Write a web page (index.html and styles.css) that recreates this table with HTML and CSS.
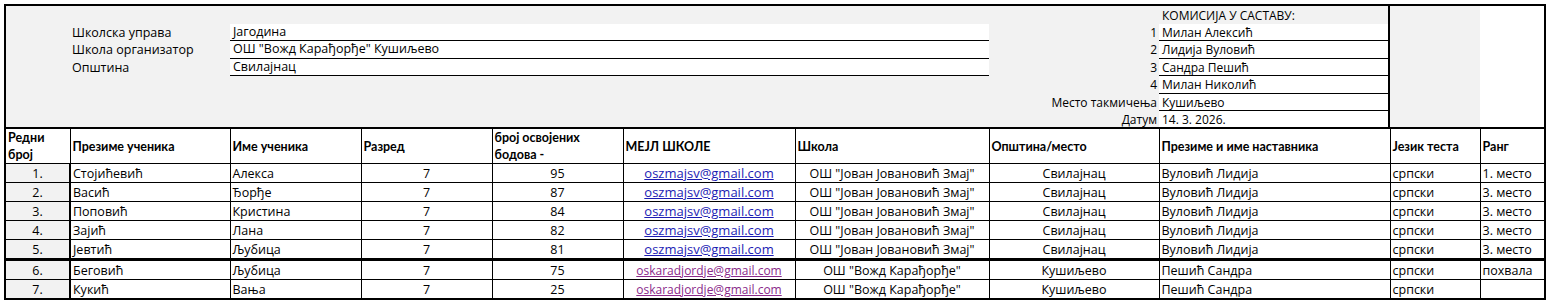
FILE: index.html
```html
<!DOCTYPE html>
<html lang="sr">
<head>
<meta charset="utf-8">
<title>Резултати такмичења</title>
<link rel="stylesheet" href="styles.css">
</head>
<body>
<div class="sheet">
  <div class="head">
    <div class="info">
      <div class="info-row"><div class="lbl">Школска управа</div><div class="val">Јагодина</div></div>
      <div class="info-row"><div class="lbl">Школа организатор</div><div class="val">ОШ "Вожд Карађорђе" Кушиљево</div></div>
      <div class="info-row"><div class="lbl">Општина</div><div class="val">Свилајнац</div></div>
    </div>
    <div class="comm">
      <div class="comm-row title"><div class="clbl"></div><div class="cval">КОМИСИЈА У САСТАВУ:</div></div>
      <div class="comm-row"><div class="clbl">1</div><div class="cval w">Милан Алексић</div></div>
      <div class="comm-row"><div class="clbl">2</div><div class="cval w">Лидија Вуловић</div></div>
      <div class="comm-row"><div class="clbl">3</div><div class="cval w">Сандра Пешић</div></div>
      <div class="comm-row"><div class="clbl">4</div><div class="cval w">Милан Николић</div></div>
      <div class="comm-row"><div class="clbl">Место такмичења</div><div class="cval w">Кушиљево</div></div>
      <div class="comm-row"><div class="clbl">Датум</div><div class="cval w last">14. 3. 2026.</div></div>
    </div>
    <div class="blank-gray"></div>
    <div class="blank-white"></div>
  </div>
  <table class="grid">
    <colgroup>
      <col class="c1"><col class="c2"><col class="c3"><col class="c4"><col class="c5"><col class="c6">
      <col class="c7"><col class="c8"><col class="c9"><col class="c10"><col class="c11">
    </colgroup>
    <thead>
      <tr>
        <th>Редни<br>број</th>
        <th>Презиме ученика</th>
        <th>Име ученика</th>
        <th>Разред</th>
        <th>број освојених<br>бодова -</th>
        <th>МЕЈЛ ШКОЛЕ</th>
        <th>Школа</th>
        <th>Општина/место</th>
        <th>Презиме и име наставника</th>
        <th>Језик теста</th>
        <th>Ранг</th>
      </tr>
    </thead>
    <tbody>
      <tr>
        <td class="num">1.</td><td>Стојићевић</td><td>Алекса</td><td class="ctr">7</td><td class="ctr">95</td>
        <td class="ctr"><a class="mail">oszmajsv@gmail.com</a></td><td class="ctr">ОШ "Јован Јовановић Змај"</td>
        <td class="ctr">Свилајнац</td><td>Вуловић Лидија</td><td>српски</td><td>1. место</td>
      </tr>
      <tr>
        <td class="num">2.</td><td>Васић</td><td>Ђорђе</td><td class="ctr">7</td><td class="ctr">87</td>
        <td class="ctr"><a class="mail">oszmajsv@gmail.com</a></td><td class="ctr">ОШ "Јован Јовановић Змај"</td>
        <td class="ctr">Свилајнац</td><td>Вуловић Лидија</td><td>српски</td><td>3. место</td>
      </tr>
      <tr>
        <td class="num">3.</td><td>Поповић</td><td>Кристина</td><td class="ctr">7</td><td class="ctr">84</td>
        <td class="ctr"><a class="mail">oszmajsv@gmail.com</a></td><td class="ctr">ОШ "Јован Јовановић Змај"</td>
        <td class="ctr">Свилајнац</td><td>Вуловић Лидија</td><td>српски</td><td>3. место</td>
      </tr>
      <tr>
        <td class="num">4.</td><td>Зајић</td><td>Лана</td><td class="ctr">7</td><td class="ctr">82</td>
        <td class="ctr"><a class="mail">oszmajsv@gmail.com</a></td><td class="ctr">ОШ "Јован Јовановић Змај"</td>
        <td class="ctr">Свилајнац</td><td>Вуловић Лидија</td><td>српски</td><td>3. место</td>
      </tr>
      <tr class="sep">
        <td class="num">5.</td><td>Јевтић</td><td>Љубица</td><td class="ctr">7</td><td class="ctr">81</td>
        <td class="ctr"><a class="mail">oszmajsv@gmail.com</a></td><td class="ctr">ОШ "Јован Јовановић Змај"</td>
        <td class="ctr">Свилајнац</td><td>Вуловић Лидија</td><td>српски</td><td>3. место</td>
      </tr>
      <tr>
        <td class="num">6.</td><td>Беговић</td><td>Љубица</td><td class="ctr">7</td><td class="ctr">75</td>
        <td class="ctr"><a class="mail visited">oskaradjordje@gmail.com</a></td><td class="ctr">ОШ "Вожд Карађорђе"</td>
        <td class="ctr">Кушиљево</td><td>Пешић Сандра</td><td>српски</td><td>похвала</td>
      </tr>
      <tr class="lastrow">
        <td class="num">7.</td><td>Кукић</td><td>Вања</td><td class="ctr">7</td><td class="ctr">25</td>
        <td class="ctr"><a class="mail visited">oskaradjordje@gmail.com</a></td><td class="ctr">ОШ "Вожд Карађорђе"</td>
        <td class="ctr">Кушиљево</td><td>Пешић Сандра</td><td>српски</td><td></td>
      </tr>
    </tbody>
  </table>
</div>
</body>
</html>
```

FILE: styles.css
```css
html, body {
  margin: 0;
  padding: 0;
  background: #ffffff;
}

body {
  font-family: "Open Sans", "Noto Sans", sans-serif;
  font-size: 12px;
  color: #000;
}

.sheet {
  margin: 4px 0 0 4px;
  width: 1538px;
  border: 2px solid #000;
  border-bottom: none;
}

.head {
  display: flex;
  height: 121px;
  background: #f2f2f2;
  overflow: hidden;
}

.info {
  width: 983px;
  padding-top: 17.5px;
  display: flex;
  flex-direction: column;
}

.info-row {
  display: flex;
  height: 17.5px;
  flex-shrink: 0;
}

.lbl {
  width: 158px;
  padding-left: 66px;
  line-height: 17px;
  font-size: 12.5px;
  white-space: nowrap;
}

.val {
  flex: 1;
  background: #fff;
  border-bottom: 1.5px solid #000;
  padding-left: 3px;
  line-height: 16px;
  font-size: 12.5px;
  white-space: nowrap;
}

.comm {
  width: 401px;
  display: flex;
  flex-direction: column;
}

.comm-row {
  display: flex;
  height: 17.4px;
  flex-shrink: 0;
}

.comm-row.title {
  height: 18px;
}

.clbl {
  width: 168px;
  padding-right: 2px;
  text-align: right;
  line-height: 18px;
  white-space: nowrap;
}

.cval {
  flex: 1;
  padding-left: 3px;
  line-height: 17.5px;
  white-space: nowrap;
  border-right: 2px solid #000;
}

.title .cval {
  line-height: 19px;
}

.cval.w {
  background: #fff;
  border-bottom: 1.5px solid #000;
}

.cval.w.last {
  border-bottom: none;
}

.blank-gray {
  width: 90px;
  background: #f2f2f2;
}

.blank-white {
  flex: 1;
  background: #fff;
}

.grid {
  width: 1538px;
  border-collapse: collapse;
  table-layout: fixed;
  border-top: 2px solid #000;
}

.c1 { width: 64px; }
.c2 { width: 160px; }
.c3 { width: 131px; }
.c4 { width: 131px; }
.c5 { width: 131px; }
.c6 { width: 172px; }
.c7 { width: 194px; }
.c8 { width: 170px; }
.c9 { width: 231px; }
.c10 { width: 90px; }
.c11 { width: 64px; }

.grid th,
.grid td {
  border: 1px solid #000;
  padding: 0 2px;
  white-space: nowrap;
  overflow: hidden;
  text-align: left;
}

.grid th:first-child,
.grid td:first-child {
  border-left: none;
}

.grid th:last-child,
.grid td:last-child {
  border-right: none;
}

.grid th {
  height: 33px;
  font-family: Lato, "Open Sans", sans-serif;
  font-weight: 700;
  font-size: 12.5px;
  line-height: 17px;
  vertical-align: middle;
}

.grid td {
  height: 18px;
  line-height: 17px;
  font-size: 12.5px;
  vertical-align: middle;
}

.grid td.num {
  background: #f2f2f2;
  text-align: center;
  border-right-width: 2px;
}

.grid td.ctr {
  text-align: center;
}

.grid tr.sep td {
  border-bottom: 3px solid #000;
}

.grid tr.lastrow td {
  border-bottom: 2px solid #000;
}

.mail {
  color: #1c1cb4;
  text-decoration: underline;
  font-size: 13px;
}

.mail.visited {
  color: #8a2a8a;
  font-size: 12px;
}
```
